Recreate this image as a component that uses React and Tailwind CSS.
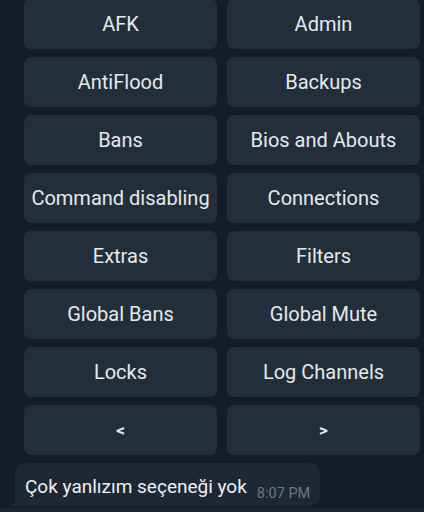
import React from "react";

const rows = [
  ["AFK", "Admin"],
  ["AntiFlood", "Backups"],
  ["Bans", "Bios and Abouts"],
  ["Command disabling", "Connections"],
  ["Extras", "Filters"],
  ["Global Bans", "Global Mute"],
  ["Locks", "Log Channels"],
  ["<", ">"],
];

export default function App() {
  return (
    <div
      className="w-[424px] h-[512px] overflow-hidden bg-[#141d27] relative"
      style={{ fontFamily: "Roboto, 'Noto Sans', sans-serif" }}
    >
      <div className="mt-[-1px] pl-[24px] pr-[4px] grid grid-cols-2 gap-x-[10px] gap-y-[8px]">
        {rows.flat().map((t, i) => (
          <div
            key={i}
            className="h-[50px] rounded-[7px] bg-[#232e3b] flex items-center justify-center text-[#e6e9ec] text-[20px] leading-none font-normal"
          >
            {t === "<" || t === ">" ? (
              <span className="text-[17px] font-bold">{t}</span>
            ) : (
              t
            )}
          </div>
        ))}
      </div>
      <div className="mt-[8px] ml-[15px] relative w-[305px] h-[43px]">
        <svg className="absolute left-[-6px] bottom-0" width="14" height="12" viewBox="0 0 14 12">
          <path d="M14 0 V12 H2 C4 11 6 8 7 4 Z" fill="#1e2834" />
        </svg>
        <div className="absolute inset-0 rounded-[10px] rounded-bl-none bg-[#1e2834] flex items-end pl-[10px] pb-[10px]">
          <span className="text-[19px] leading-none text-[#eef0f2]">Çok yanlızım seçeneği yok</span>
          <span className="ml-[10px] text-[14.5px] leading-none text-[#6c7883] mb-[-5px]">8:07 PM</span>
        </div>
      </div>
      <div className="absolute left-0 right-0 bottom-0 h-[4px] bg-[#1b2530]" />
    </div>
  );
}
